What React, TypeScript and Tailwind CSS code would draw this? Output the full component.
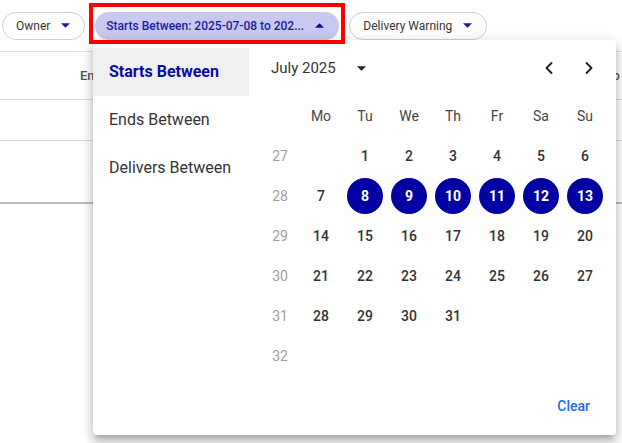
import { ChevronLeft, ChevronRight } from "lucide-react";

const weeks: { wk: number; days: (number | null)[] }[] = [
  { wk: 27, days: [null, 1, 2, 3, 4, 5, 6] },
  { wk: 28, days: [7, 8, 9, 10, 11, 12, 13] },
  { wk: 29, days: [14, 15, 16, 17, 18, 19, 20] },
  { wk: 30, days: [21, 22, 23, 24, 25, 26, 27] },
  { wk: 31, days: [28, 29, 30, 31, null, null, null] },
  { wk: 32, days: [null, null, null, null, null, null, null] },
];

const weekdays = ["Mo", "Tu", "We", "Th", "Fr", "Sa", "Su"];

function Caret({ up = false, className = "" }: { up?: boolean; className?: string }) {
  return (
    <svg width="9" height="5" viewBox="0 0 10 5" className={className}>
      {up ? <path d="M0 5 L5 0 L10 5 Z" fill="currentColor" /> : <path d="M0 0 L10 0 L5 5 Z" fill="currentColor" />}
    </svg>
  );
}

function Chip({ label }: { label: string }) {
  return (
    <button className="flex h-7 shrink-0 items-center gap-[11px] whitespace-nowrap rounded-full border border-[#cfcfcf] bg-white pl-[13px] pr-[14px] text-[12px] text-[#333]">
      {label}
      <Caret className="text-[#1a1a9e]" />
    </button>
  );
}

export default function App() {
  const selected = new Set([8, 9, 10, 11, 12, 13]);

  return (
    <div className="relative h-[443px] w-[622px] overflow-hidden bg-white font-['Roboto',sans-serif]">
      {/* Filter bar */}
      <div className="flex h-[52px] items-center border-b border-[#e3e3e3] pl-[2px]">
        <Chip label="Owner" />
        <button className="ml-[10px] flex h-7 w-[244px] shrink-0 items-center justify-between whitespace-nowrap rounded-full bg-[#c8c8f0] pl-[11px] pr-[15px] text-[12px] font-medium text-[#1c1c9c]">
          <span>Starts Between: 2025-07-08 to 202...</span>
          <Caret up className="text-[#0a0a96]" />
        </button>
        <div className="ml-[10px]">
          <Chip label="Delivery Warning" />
        </div>
      </div>

      {/* Table behind */}
      <div className="flex h-[48px] items-center border-b border-[#dcdcdc] text-[13px] font-medium text-[#555]">
        <span className="ml-[80px]">Ends</span>
        <span className="ml-auto mr-[2px]">Pro</span>
      </div>
      <div className="h-[41px] border-b border-[#d6d6d6]" />
      <div className="h-[63px] border-b-2 border-[#bdbdbd]" />

      {/* Popup */}
      <div className="absolute left-[93px] top-[40px] flex h-[395px] w-[523px] rounded bg-white shadow-[0px_5px_5px_-3px_rgba(0,0,0,0.2),0px_8px_10px_1px_rgba(0,0,0,0.14),0px_3px_14px_2px_rgba(0,0,0,0.12)]">
        <div className="w-[156px] shrink-0 pt-2">
          <div className="flex h-12 items-center bg-[#f0f0f3] pl-4 text-[16px] font-bold text-[#0a0aa6]">
            Starts Between
          </div>
          <div className="flex h-12 items-center pl-4 text-[16px] text-[#333]">Ends Between</div>
          <div className="flex h-12 items-center pl-4 text-[16px] text-[#333]">Delivers Between</div>
        </div>

        <div className="flex flex-1 flex-col pt-1">
          <div className="flex h-12 items-center pl-[22px] pr-[17px]">
            <span className="text-[15px] text-[#333]">July 2025</span>
            <Caret className="ml-[21px] text-[#222]" />
            <div className="ml-auto flex items-center gap-5">
              <ChevronLeft size={20} strokeWidth={2.25} className="text-[#222]" />
              <ChevronRight size={20} strokeWidth={2.25} className="text-[#222]" />
            </div>
          </div>

          <div className="mt-1 ml-[12px] grid grid-cols-[38px_repeat(7,44px)] auto-rows-[40px] text-[14px]">
            <div />
            {weekdays.map((d) => (
              <div key={d} className="flex items-center justify-center text-[#444]">
                {d}
              </div>
            ))}
            {weeks.map((w) => (
              <>
                <div key={`w${w.wk}`} className="flex items-center justify-center text-[#a0a0a0]">
                  {w.wk}
                </div>
                {w.days.map((d, i) => (
                  <div key={`${w.wk}-${i}`} className="flex items-center justify-center">
                    {d !== null &&
                      (selected.has(d) ? (
                        <span className="flex h-9 w-9 items-center justify-center rounded-full bg-[#0202a2] font-bold text-white">
                          {d}
                        </span>
                      ) : (
                        <span className="font-medium text-[#333]">{d}</span>
                      ))}
                  </div>
                ))}
              </>
            ))}
          </div>

          <div className="mt-3 flex justify-end pr-[18px]">
            <button className="h-9 px-2 text-[14px] font-medium text-[#1a6ee8]">Clear</button>
          </div>
        </div>
      </div>

      {/* Highlight box */}
      <div className="pointer-events-none absolute left-[89px] top-[3px] h-[41px] w-[256px] border-4 border-[#ff0000]" />
    </div>
  );
}
